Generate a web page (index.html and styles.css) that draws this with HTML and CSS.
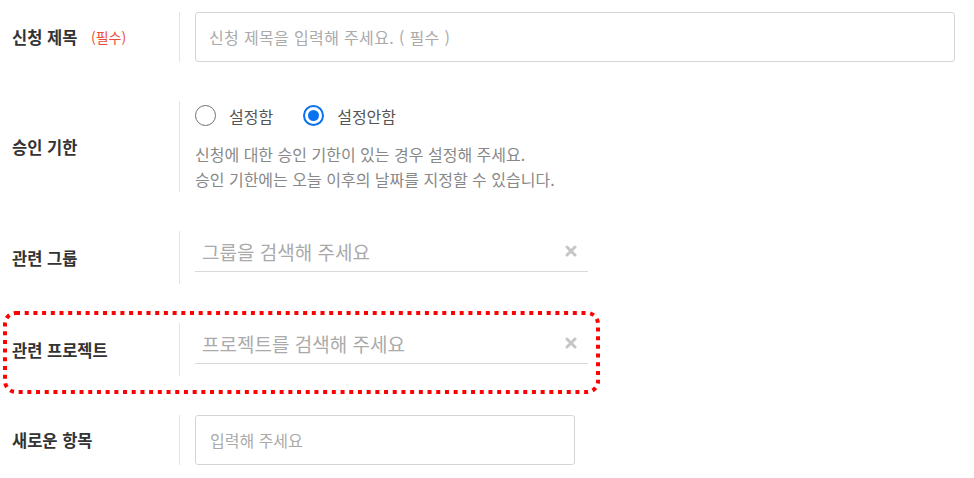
FILE: index.html
```html
<!DOCTYPE html>
<html lang="ko">
<head>
<meta charset="utf-8">
<title>신청 양식</title>
<link rel="stylesheet" href="styles.css">
</head>
<body>
<form class="form">
  <div class="row row-title">
    <div class="label">신청 제목 <span class="req">(필수)</span></div>
    <div class="field">
      <div class="box box-wide"><span class="ph">신청 제목을 입력해 주세요. ( 필수 )</span></div>
    </div>
  </div>

  <div class="row row-deadline">
    <div class="label">승인 기한</div>
    <div class="field field-col">
      <div class="radios">
        <span class="radio"><span class="dot"></span><span class="rtext">설정함</span></span>
        <span class="radio checked"><span class="dot"></span><span class="rtext">설정안함</span></span>
      </div>
      <p class="help">신청에 대한 승인 기한이 있는 경우 설정해 주세요.<br>승인 기한에는 오늘 이후의 날짜를 지정할 수 있습니다.</p>
    </div>
  </div>

  <div class="row row-search">
    <div class="label">관련 그룹</div>
    <div class="field">
      <div class="search">
        <span class="sph">그룹을 검색해 주세요</span>
        <svg class="clear" width="12" height="12" viewBox="0 0 12 12"><path d="M2 2L10 10M10 2L2 10" stroke="#c6c6c6" stroke-width="3" stroke-linecap="round"/></svg>
      </div>
    </div>
  </div>

  <div class="row row-search highlight">
    <svg class="mark" width="597" height="83" viewBox="0 0 597 83"><rect x="2" y="2" width="593" height="79" rx="11" ry="11" fill="none" stroke="#f00" stroke-width="4" stroke-dasharray="4 4.7"/></svg>
    <div class="label">관련 프로젝트</div>
    <div class="field">
      <div class="search">
        <span class="sph">프로젝트를 검색해 주세요</span>
        <svg class="clear" width="12" height="12" viewBox="0 0 12 12"><path d="M2 2L10 10M10 2L2 10" stroke="#c6c6c6" stroke-width="3" stroke-linecap="round"/></svg>
      </div>
    </div>
  </div>

  <div class="row row-new">
    <div class="label">새로운 항목</div>
    <div class="field">
      <div class="box box-short"><span class="ph ph-sm">입력해 주세요</span></div>
    </div>
  </div>
</form>
</body>
</html>
```

FILE: styles.css
```css
* { box-sizing: border-box; }
html, body { margin: 0; padding: 0; background: #fff; }
body {
  font-family: "Noto Sans CJK KR", "Noto Sans", sans-serif;
  color: #333;
}
.form {
  padding-top: 12px;
  display: flex;
  flex-direction: column;
  gap: 39px;
}
.row {
  display: flex;
  align-items: stretch;
}
.label {
  width: 179px;
  padding-left: 12px;
  display: flex;
  align-items: center;
  font-size: 16.5px;
  font-weight: 700;
  color: #333;
  white-space: pre;
}
.req {
  font-size: 14px;
  font-weight: 400;
  color: #e8503e;
  margin-left: 9px;
}
.field {
  border-left: 1px solid #e4e4e4;
  padding-left: 15px;
}
.box {
  height: 50px;
  border: 1px solid #d5d5d5;
  border-radius: 3px;
  display: flex;
  align-items: center;
  padding-left: 13px;
}
.box-wide { width: 760px; }
.box-short { width: 380px; }
.ph {
  font-size: 16px;
  letter-spacing: 0.35px;
  color: #aaa;
}
.ph-sm { font-size: 16px; letter-spacing: 0; padding-left: 1px; }

.row-deadline .field { height: 91px; }
.field-col {
  display: flex;
  flex-direction: column;
}
.radios {
  height: 30px;
  display: flex;
  align-items: center;
  gap: 30px;
}
.radio {
  display: flex;
  align-items: center;
  gap: 13px;
  font-size: 16px;
  color: #555;
}
.dot {
  width: 21px;
  height: 21px;
  border-radius: 50%;
  border: 1.5px solid #707070;
  display: flex;
  align-items: center;
  justify-content: center;
}
.checked .dot {
  border: 2px solid #0a72ee;
}
.checked .dot::after {
  content: "";
  width: 11px;
  height: 11px;
  border-radius: 50%;
  background: #0a72ee;
}
.help {
  margin: 12px 0 0;
  font-size: 16px;
  line-height: 25px;
  color: #888;
}

.row-search .field { height: 53px; }
.search {
  width: 393px;
  height: 41px;
  border-bottom: 1px solid #d9d9d9;
  display: flex;
  align-items: center;
  justify-content: space-between;
  padding: 0 11px 0 7px;
}
.sph {
  font-size: 19px;
  color: #aaa;
}

.highlight { position: relative; }
.mark {
  position: absolute;
  left: 3px;
  top: -12px;
  pointer-events: none;
}

.row-new .field { height: 50px; }
```
